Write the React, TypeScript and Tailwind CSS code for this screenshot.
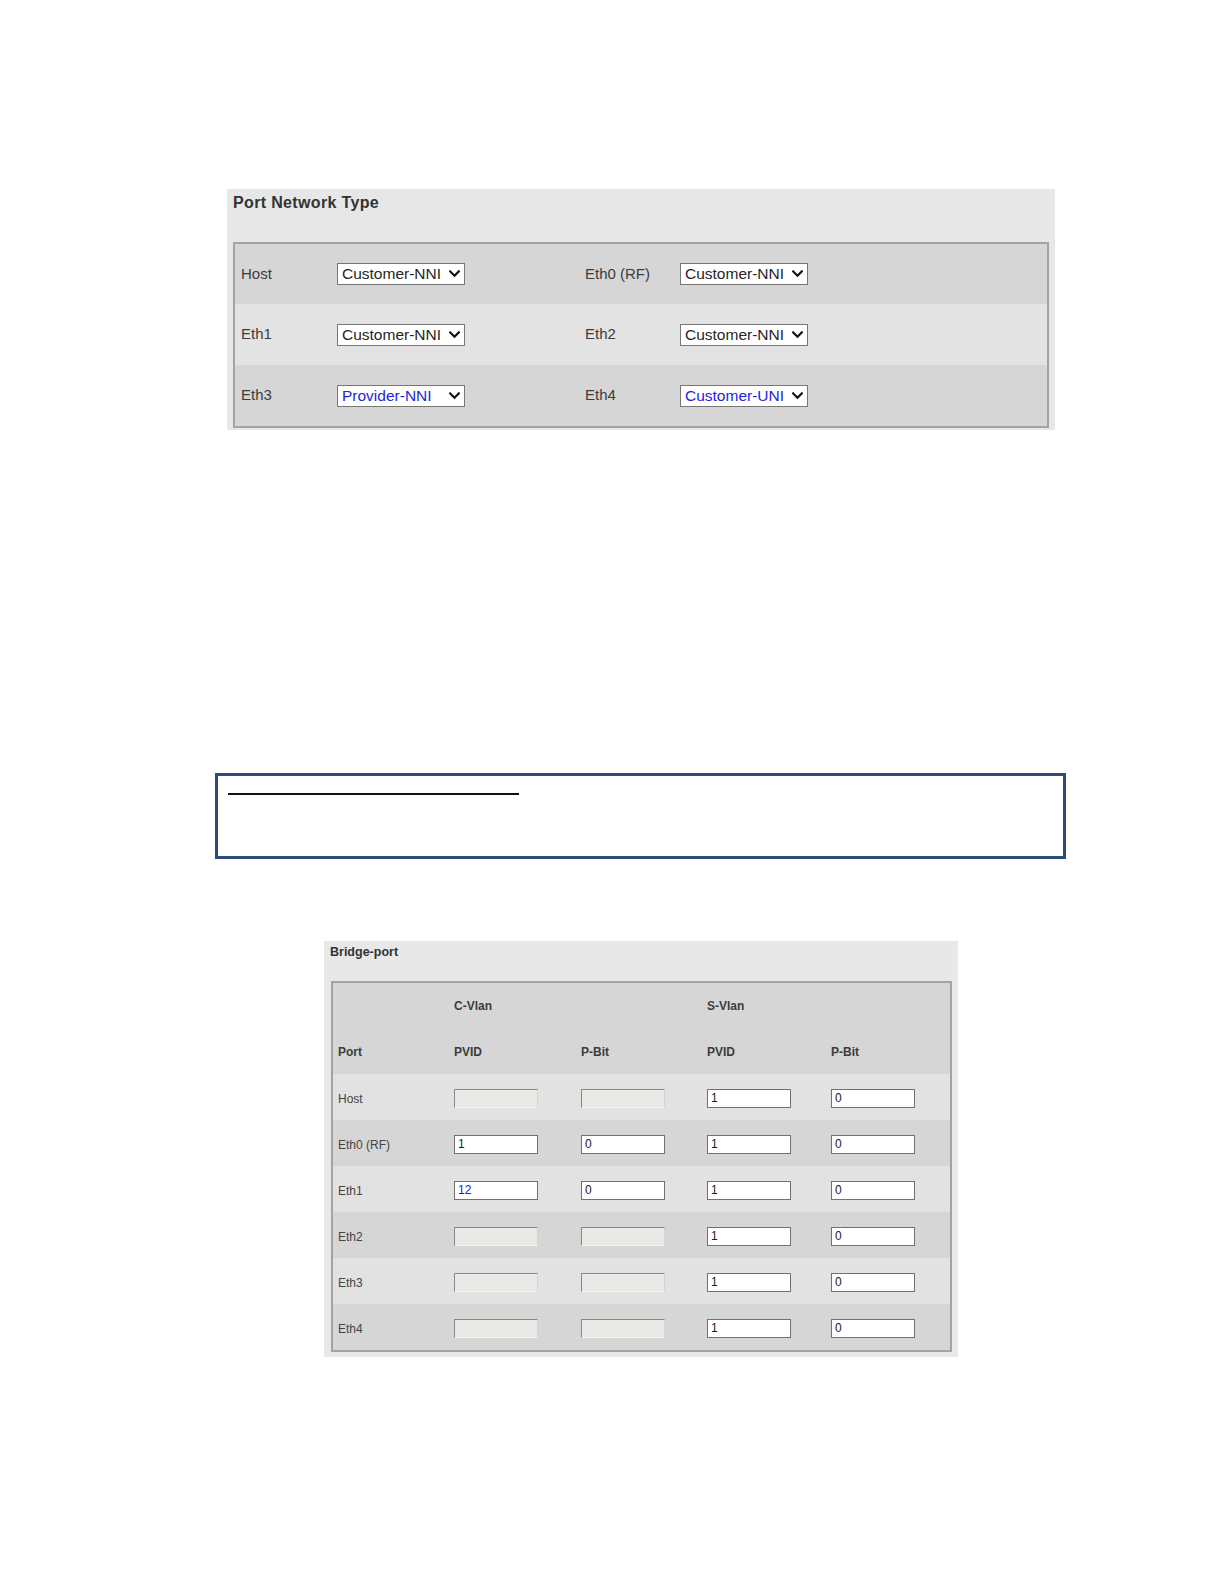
import React from 'react';

type PortType = { label: string; value: string; changed?: boolean };

const PORT_ROWS: PortType[][] = [
  [{ label: 'Host', value: 'Customer-NNI' }, { label: 'Eth0 (RF)', value: 'Customer-NNI' }],
  [{ label: 'Eth1', value: 'Customer-NNI' }, { label: 'Eth2', value: 'Customer-NNI' }],
  [{ label: 'Eth3', value: 'Provider-NNI', changed: true }, { label: 'Eth4', value: 'Customer-UNI', changed: true }],
];

type Cell = { value?: string; disabled?: boolean; changed?: boolean };
type BridgeRow = { port: string; cells: Cell[] };

const BRIDGE_ROWS: BridgeRow[] = [
  { port: 'Host', cells: [{ disabled: true }, { disabled: true }, { value: '1' }, { value: '0' }] },
  { port: 'Eth0 (RF)', cells: [{ value: '1' }, { value: '0' }, { value: '1' }, { value: '0' }] },
  { port: 'Eth1', cells: [{ value: '12', changed: true }, { value: '0' }, { value: '1' }, { value: '0' }] },
  { port: 'Eth2', cells: [{ disabled: true }, { disabled: true }, { value: '1' }, { value: '0' }] },
  { port: 'Eth3', cells: [{ disabled: true }, { disabled: true }, { value: '1' }, { value: '0' }] },
  { port: 'Eth4', cells: [{ disabled: true }, { disabled: true }, { value: '1' }, { value: '0' }] },
];

function Chevron() {
  return (
    <svg width="11" height="8" viewBox="0 0 11 8" className="shrink-0">
      <path d="M1.2 1.4 L5.5 5.8 L9.8 1.4" fill="none" stroke="#111" strokeWidth="2.2" strokeLinecap="square" />
    </svg>
  );
}

function FakeSelect({ value, changed }: { value: string; changed?: boolean }) {
  return (
    <div className="flex items-center justify-between w-[128px] h-[22px] border border-[#777777] bg-white pl-[4px] pr-[4px]">
      <span className={`text-[15.5px] leading-[20px] whitespace-nowrap ${changed ? 'text-[#2424e0]' : 'text-[#262626]'}`}>{value}</span>
      <Chevron />
    </div>
  );
}

function TextBox({ cell }: { cell: Cell }) {
  if (cell.disabled) {
    return <div className="w-[84px] h-[19px] bg-[#e9e9e5] border border-t-[#888888] border-l-[#888888] border-r-[#d4d4d4] border-b-[#f2f2f2]" />;
  }
  return (
    <div className="w-[84px] h-[19px] bg-white border border-[#707070] pl-[3px] flex items-center">
      <span className={`text-[12px] leading-[17px] ${cell.changed ? 'text-[#2020d8]' : 'text-[#222222]'}`}>{cell.value}</span>
    </div>
  );
}

export default function App() {
  return (
    <div className="w-[1224px] min-h-[1584px] bg-white flex flex-col items-start font-['Liberation_Sans',Arial,sans-serif]">
      {/* Port Network Type */}
      <div className="ml-[227px] mt-[189px] w-[828px] h-[241px] bg-[#e7e7e7] pt-[5px]">
        <div className="pl-[6px] h-[18px] text-[16px] leading-[18px] font-bold tracking-[0.35px] text-[#333333]">Port Network Type</div>
        <div className="ml-[6px] mt-[30px] w-[816px] border-2 border-[#a3a3a3]">
          {PORT_ROWS.map((row, i) => (
            <div key={i} className={`flex items-center pl-[6px] ${i === 0 ? 'h-[60px]' : 'h-[61px]'} ${i === 1 ? 'bg-[#e3e3e3]' : 'bg-[#d6d6d6]'}`}>
              <span className="w-[96px] text-[15px] text-[#3c3c3c] whitespace-nowrap">{row[0].label}</span>
              <FakeSelect value={row[0].value} changed={row[0].changed} />
              <span className="w-[120px]" />
              <span className="w-[95px] text-[15px] text-[#3c3c3c] whitespace-nowrap">{row[1].label}</span>
              <FakeSelect value={row[1].value} changed={row[1].changed} />
            </div>
          ))}
        </div>
      </div>

      {/* empty note box */}
      <div className="ml-[215px] mt-[343px] w-[851px] h-[86px] border-[3px] border-[#2d4b7b] bg-white pl-[10px] pt-[17px]">
        <div className="w-[291px] h-[2px] bg-[#111111]" />
      </div>

      {/* Bridge-port */}
      <div className="ml-[324px] mt-[82px] w-[634px] h-[416px] bg-[#e8e8e8] pt-[4px]">
        <div className="pl-[6px] h-[15px] text-[12.5px] leading-[15px] font-bold text-[#333333]">Bridge-port</div>
        <div className="ml-[7px] mt-[21px] w-[621px] border-2 border-[#a3a3a3] text-[#3c3c3c]">
          <div className="bg-[#d6d6d6] text-[12px] font-bold">
            <div className="grid grid-cols-[116px_127px_126px_124px_1fr] pl-[5px] h-[46px] items-center">
              <span />
              <span>C-Vlan</span>
              <span />
              <span>S-Vlan</span>
              <span />
            </div>
            <div className="grid grid-cols-[116px_127px_126px_124px_1fr] pl-[5px] h-[45px] items-center">
              <span>Port</span>
              <span>PVID</span>
              <span>P-Bit</span>
              <span>PVID</span>
              <span>P-Bit</span>
            </div>
          </div>
          {BRIDGE_ROWS.map((row, i) => (
            <div key={row.port} className={`grid grid-cols-[116px_127px_126px_124px_1fr] pl-[5px] h-[46px] items-center ${i % 2 === 0 ? 'bg-[#e2e2e2]' : 'bg-[#d6d6d6]'}`}>
              <span className="text-[12px] pt-[3px] text-[#444444] whitespace-nowrap">{row.port}</span>
              {row.cells.map((c, j) => (
                <div key={j} className="pt-[3px]">
                  <TextBox cell={c} />
                </div>
              ))}
            </div>
          ))}
        </div>
      </div>
    </div>
  );
}
